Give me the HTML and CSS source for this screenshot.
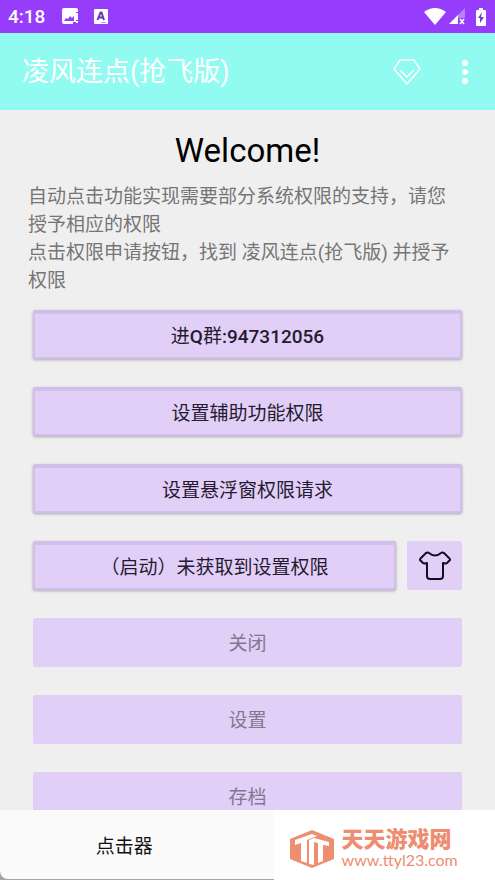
FILE: index.html
```html
<!DOCTYPE html>
<html lang="zh-CN">
<head>
<meta charset="utf-8">
<meta name="viewport" content="width=device-width, initial-scale=1">
<title>凌风连点(抢飞版)</title>
<link rel="stylesheet" href="styles.css">
</head>
<body>
<div class="status">
  <span class="time">4:18</span>
  <svg class="status-image" width="17" height="17" viewBox="0 0 17 17" aria-hidden="true">
    <path fill="#fff" fill-rule="evenodd" d="M2 0h12q2 0 2 2v2h-2v10H11v2H2q-2 0-2-2V2Q0 0 2 0zM2 13h10V8l-2 2-2-2-2 3-2-1z"/>
    <path fill="#fff" d="M14 5h2v7h-2zM14 13h2v2h-2z"/>
  </svg>
  <svg class="status-letter" width="14" height="15" viewBox="0 0 14 15" aria-hidden="true">
    <rect width="14" height="15" rx="1" fill="#fff"/>
    <path fill="none" stroke="#6b35b8" stroke-width="2" d="M3.500 11L6.500 3.500h1L10 11M4.500 8.500h5"/>
    <path stroke="#b99ae8" d="M7 13.500h5"/>
  </svg>
  <span class="spacer"></span>
  <svg width="22" height="17" viewBox="0 0 22 17" aria-hidden="true"><path fill="#fff" d="M0 4Q11-4 22 4L11 17z"/></svg>
  <svg class="signal" width="17" height="17" viewBox="0 0 17 17" aria-hidden="true">
    <path fill="#b982fb" d="M16 0v10H6z"/>
    <path fill="#fff" d="M9 7v9H0z"/>
    <path stroke="#fff" stroke-width="1.500" d="M11 11l4 5M15 11l-4 5"/>
  </svg>
  <svg class="battery" width="10" height="18" viewBox="0 0 10 18" aria-hidden="true">
    <path fill="#fff" d="M3 0h4v2h2q1 0 1 1v14q0 1-1 1H1q-1 0-1-1V3q0-1 1-1h2z"/>
    <path fill="#7b38c8" d="M6 4L2 10h2v5l4-6H5z"/>
  </svg>
</div>

<header class="appbar">
  <h1>凌风连点(抢飞版)</h1>
  <button class="icon-button" type="button" aria-label="会员">
    <svg width="30" height="28" viewBox="0 0 30 28" fill="none" stroke="#fff" stroke-width="1.500" stroke-linejoin="round" stroke-linecap="round"><path d="M8 2h14l6 9-13 15L2 11zM9 13l6 6 6-6"/></svg>
  </button>
  <button class="icon-button more" type="button" aria-label="更多">
    <svg width="6" height="24" viewBox="0 0 6 24" fill="#fff"><circle cx="3" cy="3" r="3"/><circle cx="3" cy="12" r="3"/><circle cx="3" cy="21" r="3"/></svg>
  </button>
</header>

<main>
  <h2>Welcome!</h2>
  <div class="intro">
    <p>自动点击功能实现需要部分系统权限的支持，请您授予相应的权限</p>
    <p>点击权限申请按钮，找到 凌风连点(抢飞版) 并授予权限</p>
  </div>
  <div class="actions">
    <button class="action raised" type="button">进<b>Q</b>群<b>:947312056</b></button>
    <button class="action raised" type="button">设置辅助功能权限</button>
    <button class="action raised" type="button">设置悬浮窗权限请求</button>
    <div class="row">
      <button class="action raised" type="button">（启动）未获取到设置权限</button>
      <button class="action skin" type="button" aria-label="皮肤">
        <svg width="34" height="30" viewBox="0 0 34 30" fill="none" stroke="#160c20" stroke-width="2" stroke-linejoin="round"><path d="M11 2Q17 7 23 2Q24 1 26 2L31 7Q33 9 31 10L29 12Q28 13 25 12V25Q25 28 22 28H12Q9 28 9 25V12Q6 13 5 12L3 10Q1 9 3 7L8 2Q10 1 11 2z"/></svg>
      </button>
    </div>
    <button class="action" type="button" disabled>关闭</button>
    <button class="action" type="button" disabled>设置</button>
    <button class="action" type="button" disabled>存档</button>
  </div>
</main>

<footer class="bottom">
  <nav class="tabs"><a href="#clicker">点击器</a></nav>
  <div class="brand">
    <svg width="44" height="40" viewBox="0 0 44 40" aria-hidden="true">
      <path fill="#ee8d70" d="M22 1L44 10V30L22 39 0 30V10z"/>
      <path fill="#fff" d="M5 11L22 5 27 7 17 11V34L11 32V14L5 16z"/>
      <path fill="#fff" d="M19 11L24 9 39 13V17L33 16V32L28 34V14L24 13V36L19 35z"/>
    </svg>
    <div class="brand-text">
      <strong>天天游戏网</strong>
      <span>www.ttyl23.com</span>
    </div>
  </div>
</footer>
</body>
</html>
```
FILE: styles.css
```css
* {
  box-sizing: border-box;
}

body {
  margin: 0;
  height: 100vh;
  overflow: hidden;
  background: #efefef;
  color: #000;
  font-family: Roboto, "Noto Sans CJK SC", sans-serif;
  font-size: 19px;
}

h1,
h2,
p {
  margin: 0;
  font-weight: 400;
}

button {
  border: 0;
  padding: 0;
  font: inherit;
}

svg {
  display: block;
  flex: none;
}

.status {
  display: flex;
  align-items: center;
  height: 33px;
  padding: 0 9px 0 8px;
  background: #963dfb;
  color: #fff;
}

.time {
  font-weight: 500;
}

.status-image {
  margin-left: 17px;
}

.status-letter {
  margin-left: 15px;
}

.spacer {
  flex: 1;
}

.signal {
  margin-left: 3px;
}

.battery {
  margin-left: 10px;
}

.appbar {
  display: flex;
  align-items: center;
  height: 77px;
  padding: 0 27px 0 22px;
  background: #91fbf1;
  color: #fff;
}

.appbar h1 {
  flex: 1;
  font-size: 27px;
  line-height: 40px;
}

.icon-button {
  background: none;
}

.more {
  margin-left: 40px;
}

main {
  padding: 21px 28px 0;
}

h2 {
  font-size: 33px;
  line-height: 40px;
  text-align: center;
}

.intro {
  margin-top: 12px;
  padding-right: 12px;
  color: #757575;
  line-height: 28px;
}

.actions {
  display: flex;
  flex-direction: column;
  gap: 28px;
  margin: 15px 5px 0;
}

.action {
  flex: none;
  height: 49px;
  padding-bottom: 2px;
  border-radius: 2px;
  background: #e2cff8;
  color: #251b30;
}

.action b {
  font-weight: 500;
}

.action:disabled {
  color: #82778e;
}

.raised {
  border: 2px solid #d2beea;
  border-top-width: 4px;
  box-shadow: 0 1px 3px rgba(0, 0, 0, 0.3);
}

.row {
  display: flex;
  gap: 11px;
}

.row .raised {
  flex: 1;
}

.skin {
  display: flex;
  align-items: center;
  justify-content: center;
  width: 55px;
  padding: 0;
}

.bottom {
  position: fixed;
  right: 0;
  bottom: 0;
  left: 0;
  display: flex;
  height: 70px;
  background: linear-gradient(#efefef 60px, #a5a5a5 60px);
}

.tabs {
  flex: 11;
  display: flex;
  align-items: center;
  justify-content: center;
  margin-bottom: 1px;
  padding-right: 25px;
  border-bottom-left-radius: 8px;
  background: #fafafa;
}

.tabs a {
  color: #111;
  text-decoration: none;
}

.brand {
  flex: 9;
  display: flex;
  align-items: center;
  gap: 8px;
  padding: 7px 2px 0 16px;
  background: #fff;
  color: #ee8d70;
}

.brand-text {
  display: flex;
  flex-direction: column;
  padding-top: 2px;
}

.brand strong {
  font-size: 22px;
  font-weight: 900;
  line-height: 20px;
}

.brand span {
  font-family: Lato, sans-serif;
  font-size: 16px;
  line-height: 20px;
}
```
